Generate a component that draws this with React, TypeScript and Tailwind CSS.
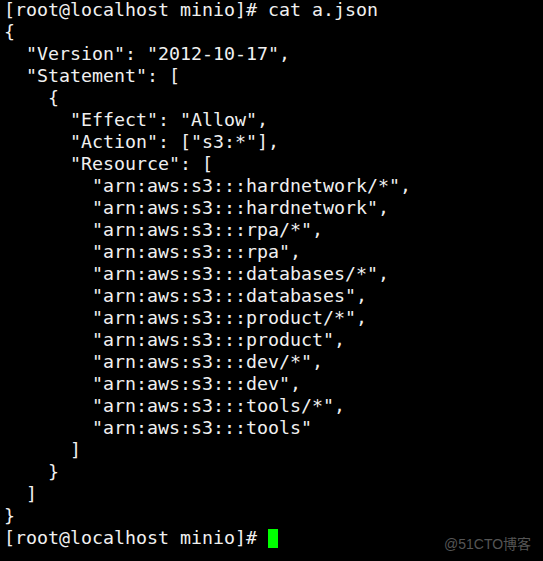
const lines = [
  "[root@localhost minio]# cat a.json",
  "{",
  '  "Version": "2012-10-17",',
  '  "Statement": [',
  "    {",
  '      "Effect": "Allow",',
  '      "Action": ["s3:*"],',
  '      "Resource": [',
  '        "arn:aws:s3:::hardnetwork/*",',
  '        "arn:aws:s3:::hardnetwork",',
  '        "arn:aws:s3:::rpa/*",',
  '        "arn:aws:s3:::rpa",',
  '        "arn:aws:s3:::databases/*",',
  '        "arn:aws:s3:::databases",',
  '        "arn:aws:s3:::product/*",',
  '        "arn:aws:s3:::product",',
  '        "arn:aws:s3:::dev/*",',
  '        "arn:aws:s3:::dev",',
  '        "arn:aws:s3:::tools/*",',
  '        "arn:aws:s3:::tools"',
  "      ]",
  "    }",
  "  ]",
  "}",
];

export default function App() {
  return (
    <div className="relative w-[543px] h-[561px] bg-black overflow-hidden">
      <pre className="pl-[4px] -mt-px font-['DejaVu_Sans_Mono',monospace] text-[18.27px] leading-[22px] text-[#f0f0f0] whitespace-pre">
        {lines.map((l, i) => (
          <div key={i}>{l}</div>
        ))}
        <div className="flex items-center">
          <span>{"[root@localhost minio]# "}</span>
          <span className="w-[10px] h-[19px] bg-[#00ff00]" />
        </div>
      </pre>
      {/* watermark */}
      <div className="absolute left-[444px] top-[534px] font-['Liberation_Sans','Noto_Sans_CJK_SC',sans-serif] text-[14px] text-[#555555]">
        @51CTO博客
      </div>
    </div>
  );
}
